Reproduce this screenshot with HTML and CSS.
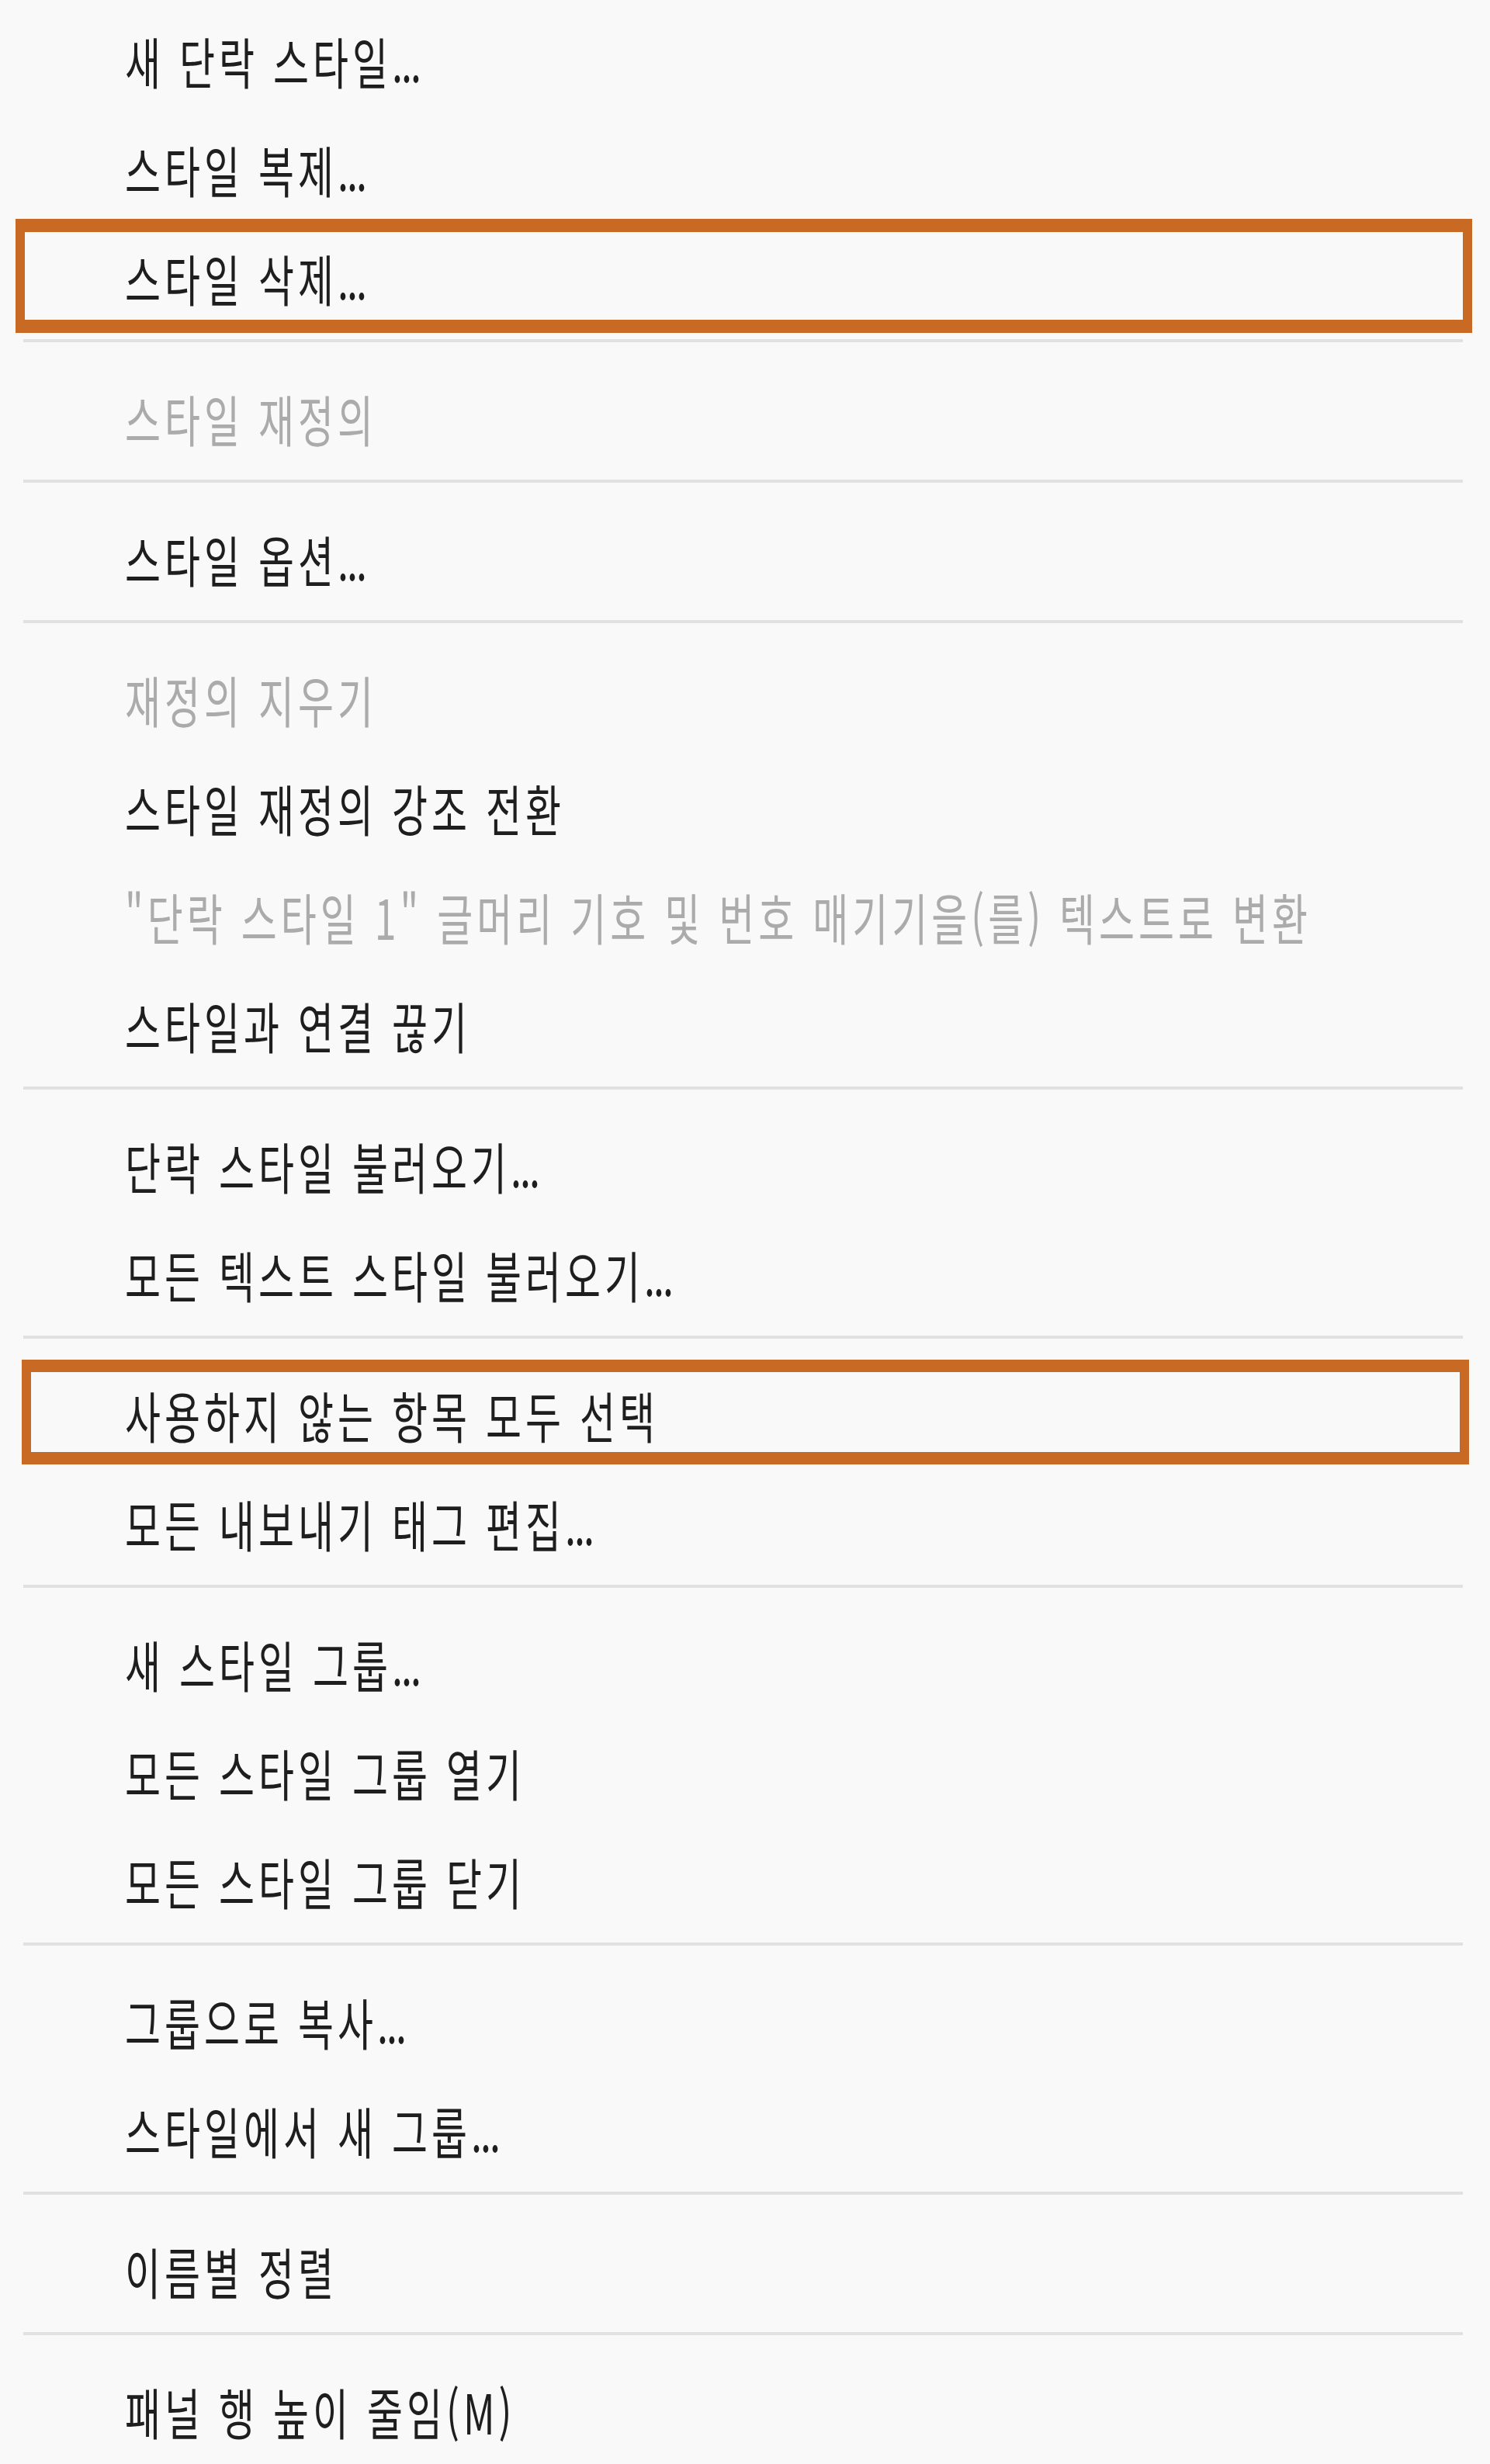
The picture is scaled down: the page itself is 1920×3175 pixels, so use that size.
FILE: index.html
```html
<!DOCTYPE html>
<html lang="ko">
<head>
<meta charset="utf-8">
<title>스타일 메뉴</title>
<link rel="stylesheet" href="styles.css">
</head>
<body>
<div class="menu">
  <div class="item"><span class="label">새 단락 스타일<span class="dots">...</span></span></div>
  <div class="item"><span class="label">스타일 복제<span class="dots">...</span></span></div>
  <div class="item marked marked-a"><span class="label">스타일 삭제<span class="dots">...</span></span></div>
  <div class="sep"></div>
  <div class="item disabled"><span class="label">스타일 재정의</span></div>
  <div class="sep"></div>
  <div class="item"><span class="label">스타일 옵션<span class="dots">...</span></span></div>
  <div class="sep"></div>
  <div class="item disabled"><span class="label">재정의 지우기</span></div>
  <div class="item"><span class="label">스타일 재정의 강조 전환</span></div>
  <div class="item disabled"><span class="label">"단락 스타일 1" 글머리 기호 및 번호 매기기을(를) 텍스트로 변환</span></div>
  <div class="item"><span class="label">스타일과 연결 끊기</span></div>
  <div class="sep"></div>
  <div class="item"><span class="label">단락 스타일 불러오기<span class="dots">...</span></span></div>
  <div class="item"><span class="label">모든 텍스트 스타일 불러오기<span class="dots">...</span></span></div>
  <div class="sep"></div>
  <div class="item marked marked-b"><span class="label">사용하지 않는 항목 모두 선택</span></div>
  <div class="item"><span class="label">모든 내보내기 태그 편집<span class="dots">...</span></span></div>
  <div class="sep"></div>
  <div class="item"><span class="label">새 스타일 그룹<span class="dots">...</span></span></div>
  <div class="item"><span class="label">모든 스타일 그룹 열기</span></div>
  <div class="item"><span class="label">모든 스타일 그룹 닫기</span></div>
  <div class="sep"></div>
  <div class="item"><span class="label">그룹으로 복사<span class="dots">...</span></span></div>
  <div class="item"><span class="label">스타일에서 새 그룹<span class="dots">...</span></span></div>
  <div class="sep"></div>
  <div class="item"><span class="label">이름별 정렬</span></div>
  <div class="sep"></div>
  <div class="item"><span class="label">패널 행 높이 줄임(M)</span></div>
</div>
</body>
</html>
```

FILE: styles.css
```css
html, body {
  margin: 0;
  padding: 0;
  background: #f9f9f9;
}

body {
  width: 1920px;
  min-height: 3175px;
  font-family: "Noto Sans CJK KR", "Noto Sans", sans-serif;
  color: #1e1e1e;
}

.menu {
  padding-top: 7px;
  display: flex;
  flex-direction: column;
}

.item {
  position: relative;
  height: 140px;
  display: flex;
  align-items: center;
  padding-left: 161px;
  box-sizing: border-box;
}

.label {
  display: inline-block;
  font-size: 50px;
  line-height: 1;
  letter-spacing: 5px;
  white-space: nowrap;
  transform: scaleY(1.42);
  transform-origin: left center;
}

.dots {
  letter-spacing: -2px;
}

.disabled .label {
  color: #ababab;
}

.sep {
  height: 41px;
  box-sizing: border-box;
  padding: 10px 35px 27px 30px;
}

.sep::before {
  content: "";
  display: block;
  height: 4px;
  background: #e1e1e1;
}

.marked::after {
  content: "";
  position: absolute;
  border-style: solid;
  border-color: #c96a24;
  border-width: 17px 12px;
  pointer-events: none;
}

.marked-a::after {
  top: -5px;
  bottom: -2px;
  left: 20px;
  right: 23px;
}

.marked-b::after {
  top: 0;
  bottom: 5px;
  left: 28px;
  right: 27px;
  border-width: 16px 12px;
}
```
